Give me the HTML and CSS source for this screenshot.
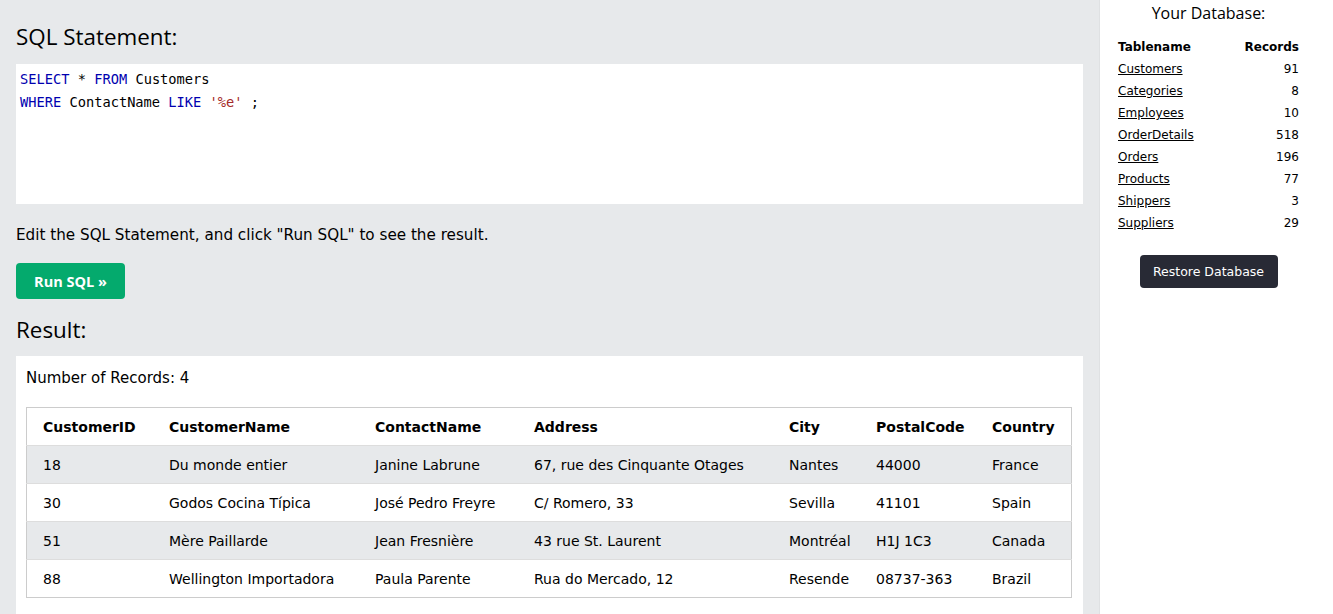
FILE: index.html
```html
<!DOCTYPE html>
<html>
<head>
<meta charset="utf-8">
<link rel="stylesheet" href="styles.css">
</head>
<body>
<div class="page">
  <main class="main">
    <h2 class="heading first">SQL Statement:</h2>
    <div class="code">
      <div><span class="kw">SELECT</span> * <span class="kw">FROM</span> Customers</div>
      <div><span class="kw">WHERE</span> ContactName <span class="kw">LIKE</span> <span class="str">'%e'</span> ;</div>
    </div>
    <p class="hint">Edit the SQL Statement, and click "Run SQL" to see the result.</p>
    <button class="run">Run SQL »</button>
    <h2 class="heading">Result:</h2>
    <div class="result">
      <div class="count">Number of Records: 4</div>
      <table class="data">
        <thead>
          <tr><th class="c1">CustomerID</th><th class="c2">CustomerName</th><th class="c3">ContactName</th><th class="c4">Address</th><th class="c5">City</th><th class="c6">PostalCode</th><th class="c7">Country</th></tr>
        </thead>
        <tbody>
          <tr><td>18</td><td>Du monde entier</td><td>Janine Labrune</td><td>67, rue des Cinquante Otages</td><td>Nantes</td><td>44000</td><td>France</td></tr>
          <tr><td>30</td><td>Godos Cocina Típica</td><td>José Pedro Freyre</td><td>C/ Romero, 33</td><td>Sevilla</td><td>41101</td><td>Spain</td></tr>
          <tr><td>51</td><td>Mère Paillarde</td><td>Jean Fresnière</td><td>43 rue St. Laurent</td><td>Montréal</td><td>H1J 1C3</td><td>Canada</td></tr>
          <tr><td>88</td><td>Wellington Importadora</td><td>Paula Parente</td><td>Rua do Mercado, 12</td><td>Resende</td><td>08737-363</td><td>Brazil</td></tr>
        </tbody>
      </table>
    </div>
  </main>
  <aside class="side">
    <div class="side-inner">
      <h3 class="side-title">Your Database:</h3>
      <table class="db">
        <thead><tr><th class="tn">Tablename</th><th class="rc">Records</th></tr></thead>
        <tbody>
          <tr><td><a href="#">Customers</a></td><td class="num">91</td></tr>
          <tr><td><a href="#">Categories</a></td><td class="num">8</td></tr>
          <tr><td><a href="#">Employees</a></td><td class="num">10</td></tr>
          <tr><td><a href="#">OrderDetails</a></td><td class="num">518</td></tr>
          <tr><td><a href="#">Orders</a></td><td class="num">196</td></tr>
          <tr><td><a href="#">Products</a></td><td class="num">77</td></tr>
          <tr><td><a href="#">Shippers</a></td><td class="num">3</td></tr>
          <tr><td><a href="#">Suppliers</a></td><td class="num">29</td></tr>
        </tbody>
      </table>
      <button class="restore">Restore Database</button>
    </div>
  </aside>
</div>
</body>
</html>
```

FILE: styles.css
```css
html, body {
  margin: 0;
  padding: 0;
  height: 100%;
  overflow: hidden;
}
body {
  font-family: "DejaVu Sans", Verdana, sans-serif;
  font-size: 15px;
  color: #000;
  background: #fff;
}
.page {
  display: flex;
  height: 614px;
  overflow: hidden;
}
.main {
  width: 1067px;
  padding: 0 16px;
  background: #e7e9eb;
  border-right: 1px solid #dfe1e3;
}
.heading {
  font-family: "Open Sans", "Noto Sans", sans-serif;
  font-weight: 400;
  font-size: 22.4px;
  line-height: 30px;
  margin: 0;
  color: #000;
}
.heading.first {
  padding-top: 22px;
  margin-bottom: 12px;
}
.code {
  background: #fff;
  height: 135px;
  padding: 4px 4px 1px;
  font-family: "DejaVu Sans Mono", monospace;
  font-size: 13.7px;
  line-height: 23px;
  color: #000;
}
.kw { color: #0000b0; }
.str { color: #a52a2a; }
.hint {
  margin: 20px 0 17px;
  line-height: 22px;
  font-size: 15.2px;
}
.run {
  display: block;
  background: #04aa6d;
  color: #fff;
  border: none;
  border-radius: 4px;
  width: 109px;
  height: 36px;
  font-family: "Open Sans", sans-serif;
  font-weight: 700;
  font-size: 14.5px;
  padding: 0;
  margin-bottom: 16px;
}
.result {
  background: #fff;
  margin-top: 11px;
  padding: 13px 10px 10px;
  height: 235px;
}
.count {
  line-height: 18px;
  margin-bottom: 20px;
}
.data {
  border-collapse: collapse;
  border: 1px solid #ccc;
  width: 1046px;
  table-layout: fixed;
  font-size: 14px;
}
.data th, .data td {
  text-align: left;
  padding: 9px 8px 8px;
  line-height: 20px;
  white-space: nowrap;
  border-bottom: 1px solid #ddd;
  vertical-align: top;
}
.data th:first-child, .data td:first-child {
  padding-left: 16px;
}
.data th { font-weight: 700; }
.data tbody tr:nth-child(odd) { background: #e7e9eb; }
.data tbody tr:last-child td { border-bottom: none; }
.c1 { width: 110px; }
.c2 { width: 190px; }
.c3 { width: 143px; }
.c4 { width: 239px; }
.c5 { width: 71px; }
.c6 { width: 100px; }
.c7 { width: 71px; }

.side {
  flex: 1;
  background: #fff;
  padding-right: 16px;
}
.side-inner {
  display: flex;
  flex-direction: column;
  align-items: center;
}
.side-title {
  font-family: "Open Sans", "Noto Sans", sans-serif;
  font-weight: 400;
  font-size: 16px;
  line-height: 22px;
  margin: 2px 0 12px;
}
.db {
  border-collapse: collapse;
  width: 181px;
  font-size: 12px;
}
.db th, .db td {
  padding: 0;
  height: 22px;
  line-height: 22px;
  text-align: left;
}
.db th { font-weight: 700; }
.db .rc, .db .num { text-align: right; }
.db a { color: #000; text-decoration: underline; }
.restore {
  margin-top: 21px;
  width: 138px;
  height: 33px;
  background: #282a35;
  color: #fff;
  border: none;
  border-radius: 4px;
  font-family: "DejaVu Sans", Verdana, sans-serif;
  font-size: 12.5px;
  padding: 0;
}
```
